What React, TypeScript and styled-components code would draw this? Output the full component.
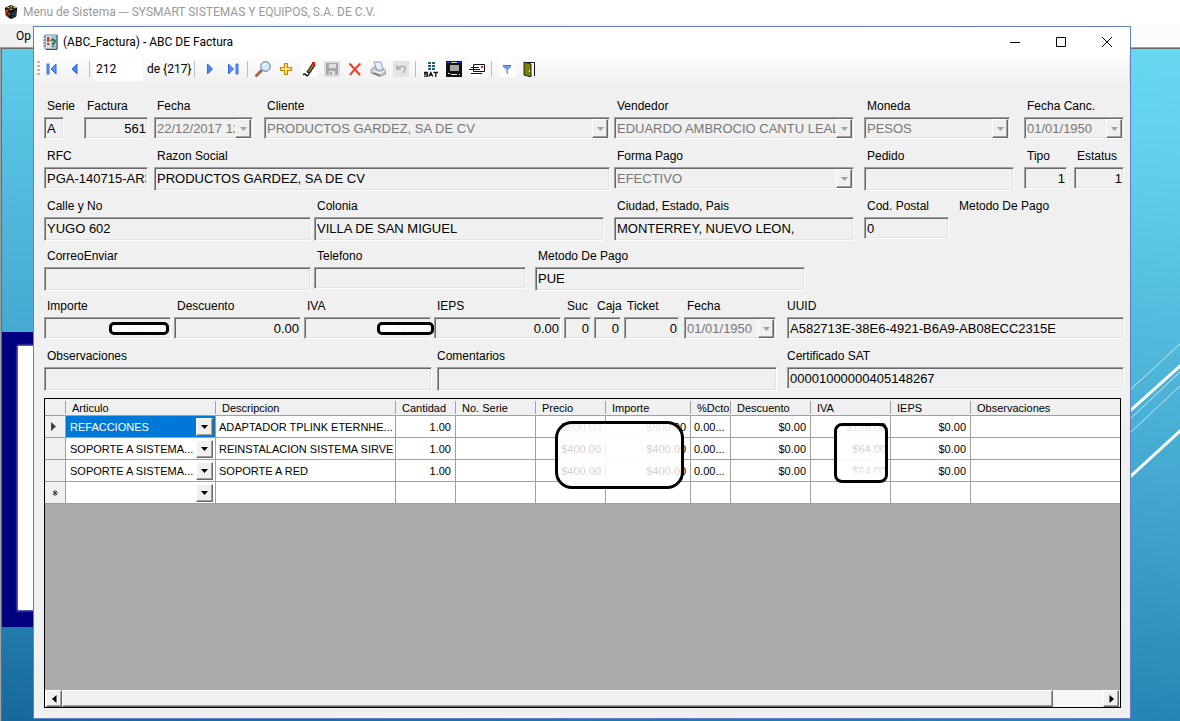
import React, { useId } from "react";
import styled, { createGlobalStyle, css } from "styled-components";

const uiFont = `Roboto, "Open Sans", sans-serif`;
const formFont = `"Liberation Sans", Arial, sans-serif`;

const Global = createGlobalStyle`
  *, *::before, *::after { box-sizing: border-box; }
  body { margin: 0; overflow: hidden; background: #1d73a5; font-family: ${formFont}; }
  button, input, select { font: inherit; color: inherit; margin: 0; padding: 0; border: 0; border-radius: 0; outline: 0; }
`;

/* ---------- main window behind ---------- */

const Desktop = styled.div`
  position: relative;
  display: flex;
  flex-direction: column;
  height: 100vh;
  min-height: 560px;
  overflow: hidden;
`;

const MainTitle = styled.header`
  display: flex;
  align-items: center;
  gap: 5px;
  height: 24px;
  padding-left: 4px;
  background: #fff;
  color: #999;
  font: 12px/16px ${uiFont};
`;

const MenuBar = styled.nav`
  display: flex;
  align-items: center;
  height: 23px;
  padding-left: 16px;
  background: linear-gradient(90deg, #f0f0f0, #fcfcfc);
  font: 12px/16px ${uiFont};
`;

const MenuButton = styled.button`
  background: none;
`;

const Client = styled.main`
  position: relative;
  flex: 1;
  border-left: 1px solid #a0a0a0;
  border-top: 1px solid #a0a0a0;
  box-shadow: inset 1px 1px 0 #696969;
  background: linear-gradient(187deg, #68d8f1 0%, #62d0ec 14%, #3fa1cb 60%, #2583b3 84%, #17679a 100%);
`;

const Logo = styled.div`
  position: absolute;
  left: 1px;
  top: 284px;
  width: 120px;
  height: 295px;
  background: #000080;
  padding: 14px 16px;
  &::before {
    content: "";
    display: block;
    height: 264px;
    background: #fff;
    box-shadow: 0 0 2px 1px #8080c8;
  }
`;

const Streaks = styled.svg`
  position: absolute;
  right: 0;
  top: 292px;
`;

/* ---------- invoice window ---------- */

const Window = styled.section`
  position: absolute;
  inset: 26px 49px 2px 33px;
  display: flex;
  flex-direction: column;
  border: 1px solid #5f7fc6;
  background: #f0f0f0;
`;

const TitleBar = styled.header`
  display: flex;
  align-items: center;
  height: 30px;
  padding-left: 8px;
  gap: 5px;
  background: #fff;
  font: 12px/16px ${uiFont};
  h1 { flex: 1; margin: 0; font: inherit; }
`;

const CaptionButtons = styled.div`
  display: flex;
  height: 100%;
`;

const CaptionButton = styled.button`
  display: grid;
  place-items: center;
  width: 46px;
  background: none;
`;

const ToolBar = styled.div`
  display: flex;
  align-items: center;
  height: 26px;
  padding: 0 0 2px 3px;
  background: linear-gradient(#fdfdfd, #f0f0f0);
  border-right: 1px solid #ddd;
  font: 12px/16px ${uiFont};
`;

const Grip = styled.span`
  width: 3px;
  height: 16px;
  background: repeating-linear-gradient(#b8b8b8 0 2px, transparent 2px 4px);
`;

const ToolButton = styled.button`
  display: grid;
  place-items: center;
  width: 23px;
  height: 22px;
  background: none;
`;

const Separator = styled.span`
  width: 1px;
  height: 16px;
  margin: 0 3px;
  background: #bdbdbd;
`;

const PositionInput = styled.input`
  width: 50px;
  height: 23px;
  padding-left: 3px;
  background: #fff;
`;

const Total = styled.span`
  width: 48px;
  padding-left: 4px;
  white-space: nowrap;
`;

/* ---------- form ---------- */

const Form = styled.form`
  padding: 15px 0 0 10px;
`;

const Row = styled.div<{ $end?: number }>`
  display: flex;
  height: 50px;
  padding-right: ${(p) => p.$end ?? 6}px;
`;

const FieldBox = styled.div<{ $w: number; $before: number }>`
  position: relative;
  flex: ${(p) => `${p.$w} ${p.$w} ${p.$w}px`};
  min-width: 0;
  margin-left: ${(p) => p.$before}px;
`;

const labelText = css`
  display: block;
  margin-bottom: 3px;
  font-size: 12px;
  line-height: 16px;
  white-space: nowrap;
`;

const Label = styled.label<{ $inset: number }>`
  ${labelText}
  padding-left: ${(p) => p.$inset}px;
`;

const Caption = styled.span`
  ${labelText}
  flex: none;
  width: 93px;
  margin-left: 10px;
`;

const Sunken = styled.div<{ $tall?: boolean; $muted?: boolean }>`
  display: flex;
  height: ${(p) => (p.$tall ? 24 : 22)}px;
  border: 1px solid;
  border-color: #a0a0a0 #fff #fff #a0a0a0;
  box-shadow: inset 1px 1px 0 #696969, inset -1px -1px 0 #e3e3e3;
  padding: 1px 1px 2px 1px;
  font-size: 13px;
  color: ${(p) => (p.$muted ? "#777" : "#000")};
`;

const TextInput = styled.input<{ $right?: boolean }>`
  flex: 1;
  min-width: 0;
  height: 18px;
  padding-left: 1px;
  background: transparent;
  text-align: ${(p) => (p.$right ? "right" : "left")};
  &:disabled { color: inherit; }
`;

const Select = styled.select`
  flex: 1;
  min-width: 0;
  height: 18px;
  padding-left: 1px;
  appearance: none;
  background: transparent;
  &:disabled { color: inherit; opacity: 1; }
`;

const DropButton = styled.button<{ $cell?: boolean }>`
  display: grid;
  place-items: center;
  flex: none;
  width: ${(p) => (p.$cell ? 17 : 16)}px;
  height: ${(p) => (p.$cell ? 18 : 19)}px;
  background: #f0f0f0;
  color: #000;
  border: 1px solid;
  border-color: #fff #696969 #696969 #fff;
  box-shadow: inset -1px -1px 0 #a0a0a0;
  &:disabled { color: #a0a0a0; }
`;

const Redaction = styled.span<{ $right: number; $w: number }>`
  position: absolute;
  right: ${(p) => p.$right}px;
  top: 24px;
  width: ${(p) => p.$w}px;
  height: 13px;
  border: 3px solid #000;
  border-radius: 5px;
  background: rgba(255, 255, 255, 0.95);
`;

/* ---------- detail grid ---------- */

const GridFrame = styled.div`
  position: relative;
  flex: 1;
  display: flex;
  flex-direction: column;
  min-height: 0;
  margin: 0 9px 10px 10px;
  border: 1px solid #000;
  background: #ababab;
`;

const GridBody = styled.div`
  flex: 1;
  min-height: 0;
  overflow: hidden;
`;

const Table = styled.table`
  width: 100%;
  table-layout: fixed;
  border-collapse: separate;
  border-spacing: 0;
  background: #fff;
  font-size: 11px;
  line-height: 14px;
`;

const Th = styled.th`
  height: 17px;
  padding: 1px 0 0 6px;
  border-bottom: 1px solid #a0a0a0;
  background: linear-gradient(#a0a0a0, #a0a0a0) right 0 top 2px / 1px 13px no-repeat #f0f0f0;
  font-weight: 400;
  text-align: left;
  white-space: nowrap;
  &:last-child { background: #f0f0f0; }
`;

const RowHead = styled.th`
  height: 22px;
  padding: 0;
  background: #f0f0f0;
  border-right: 1px solid #a0a0a0;
  border-bottom: 1px solid #a0a0a0;
  svg { display: block; margin-left: 5px; }
`;

const Td = styled.td<{ $right?: boolean }>`
  height: 22px;
  padding: 0 4px 0 3px;
  border-right: 1px solid #a0a0a0;
  border-bottom: 1px solid #a0a0a0;
  text-align: ${(p) => (p.$right ? "right" : "left")};
  white-space: nowrap;
  overflow: hidden;
  &:last-child { border-right: 0; }
`;

const ComboCell = styled.div<{ $selected?: boolean }>`
  display: flex;
  align-items: center;
  height: 21px;
  margin: 0 -4px 0 -3px;
  padding: 0 2px 0 3px;
  background: ${(p) => (p.$selected ? "#0078d7" : "#fff")};
  color: ${(p) => (p.$selected ? "#fff" : "#000")};
`;

const Scribble = styled.div<{ $x: number; $y: number; $w: number; $h: number; $r: number }>`
  position: absolute;
  left: ${(p) => p.$x}px;
  top: ${(p) => p.$y}px;
  width: ${(p) => p.$w}px;
  height: ${(p) => p.$h}px;
  border: 3px solid #000;
  border-radius: ${(p) => p.$r}px;
  background: linear-gradient(rgba(255, 255, 255, 0.86), rgba(255, 255, 255, 0.97) 20%, rgba(255, 255, 255, 0.78) 40%, rgba(255, 255, 255, 0.96) 58%, rgba(255, 255, 255, 0.78) 76%, #fff 92%);
`;

const ScrollBar = styled.div`
  display: flex;
  height: 17px;
  padding: 0 1px;
  background: repeating-conic-gradient(#fff 0 25%, #f0f0f0 0 50%) 0 0 / 2px 2px;
`;

const raised = css`
  background: #f0f0f0;
  border: 1px solid;
  border-color: #fff #696969 #696969 #fff;
  box-shadow: inset -1px -1px 0 #a0a0a0;
`;

const ScrollButton = styled.button`
  ${raised}
  display: grid;
  place-items: center;
  flex: none;
  width: 16px;
`;

const Track = styled.div`
  flex: 1;
  padding-right: 50px;
`;

const Thumb = styled.div`
  ${raised}
  height: 100%;
`;

/* ---------- icons ---------- */

const Svg = ({ children, size = 16 }: { children: React.ReactNode; size?: number }) => (
  <svg width={size} height={size} viewBox="0 0 16 16" aria-hidden="true">{children}</svg>
);

const CubeIcon = () => (
  <svg width="14" height="14" viewBox="0 0 16 16" aria-hidden="true">
    <path d="M1 3 8 0l7 3v2l-1 8-5 3-3-1-4-3z" fill="#14120c" />
    <path d="M2 6l2 1v3L2 9zM5 8l2 1v3l-2-1zM3 11l2 1v2l-2-1z" fill="#d84020" />
    <path d="M3 3l2-1 2 1-2 1zM7 1.500 9 1l1 1-2 1zM10 3l2-1 2 1-2 1zM6 4.500 8 4l2 1-2 1z" fill="#f5d020" />
    <path d="M9 9l2-1v3l-2 1zM12 7l2-1v2l-2 1zM9 13l2-1v2l-2 1zM12 10l1.500-1v3L12 13z" fill="#24527c" />
    <path d="M3 5l2 1v1L2 6z" fill="#f08020" />
  </svg>
);

const BookIcon = () => (
  <Svg>
    <path d="M3 1h12v14H3z" fill="#dfe8f2" stroke="#6d87a6" />
    <path d="M9 1.500h5.500v13H9z" fill="#a9c0d8" />
    <path d="M15 1v14.500H4" stroke="#35506e" fill="none" />
    <path d="M1 3h3M1 6h3M1 9h3M1 12h3" stroke="#777" />
    <path d="M5 3h2.500v5H5zM5 9h2.500v2H5z" fill="#e83818" />
    <path d="M9 7q1-2 3-1t0 3l-1 1v1M11 12v1" fill="none" stroke="#0a7020" strokeWidth="1.600" />
  </Svg>
);

const blue = "#2f6be0";
const FirstIcon = () => (
  <Svg><path d="M3 3h2v10H3z" fill="#7ba4f4" stroke={blue} /><path d="M12 3v10L7 8z" fill="#5b8df0" stroke={blue} /></Svg>
);
const PrevIcon = () => <Svg><path d="M10 3v10L5 8z" fill="#4b80ee" stroke={blue} /></Svg>;
const NextIcon = () => <Svg><path d="M5.500 3v10l5-5z" fill="#4b80ee" stroke={blue} /></Svg>;
const LastIcon = () => (
  <Svg><path d="M3.500 3v10l5-5z" fill="#5b8df0" stroke={blue} /><path d="M11 3h2v10h-2z" fill="#7ba4f4" stroke={blue} /></Svg>
);
const SearchIcon = () => (
  <Svg>
    <path d="M6.500 9.500 1.500 14.500" stroke="#a06a48" strokeWidth="3" strokeLinecap="round" />
    <circle cx="10.500" cy="5.500" r="4.700" fill="#cfeafc" stroke="#8796ac" strokeWidth="1.400" />
    <path d="M8 5q1-2.500 3.500-2.500" stroke="#fff" strokeWidth="1.500" fill="none" />
  </Svg>
);
const PlusIcon = () => (
  <Svg><path d="M6.500 2.500h3v4h4v3h-4v4h-3v-4h-4v-3h4z" fill="#ffe07a" stroke="#c08a10" strokeWidth="1.200" /></Svg>
);
const PencilIcon = () => (
  <Svg>
    <path d="M0 0h16v16H0z" fill="#fff" />
    <path d="M13 3 7 12" stroke="#111" strokeWidth="4" />
    <path d="M13 3 7.500 11" stroke="#8a8a10" strokeWidth="2" />
    <path d="M11 1h3v3h-3z" fill="#e01818" />
    <path d="M2 14q2-2 3 0t3-1" stroke="#111" strokeWidth="1.400" fill="none" />
  </Svg>
);
const SaveIcon = () => (
  <Svg>
    <path d="M0 0h16v16H0z" fill="#dedede" />
    <path d="M2 2h12v12H2z" fill="#a8a8a8" />
    <path d="M5 3h7v4H5zM5 10h6v4H5z" fill="#dedede" />
    <path d="M6 11h2v3H6z" fill="#a8a8a8" />
  </Svg>
);
const DeleteIcon = () => (
  <Svg><path d="M2.500 2.500 13 14M13.500 2.500Q7 8 3 14" stroke="#f23a20" strokeWidth="2" fill="none" /></Svg>
);
const PrintIcon = () => (
  <Svg>
    <path d="M1 8.500 4 6h8l3.500 4v3L10 15.500 1 12z" fill="#c4c4c4" stroke="#8a8a8a" strokeWidth="0.800" />
    <path d="M4 1h7l2 8-6 0z" fill="#e5f0fc" stroke="#8ba0bd" />
    <path d="M2 9.500 10 12l5-2" stroke="#fff" fill="none" />
    <path d="M3 12l7 2.500" stroke="#666" />
  </Svg>
);
const UndoIcon = () => (
  <Svg>
    <path d="M0 0h16v16H0z" fill="#e4e4e4" />
    <path d="M4 4v4h4M4.500 7.500Q7 4.500 10.500 5.500T10 12" stroke="#aaa" strokeWidth="1.500" fill="none" />
  </Svg>
);
const SatIcon = () => (
  <Svg>
    <path d="M0 0h16v16H0z" fill="#fff" />
    <path d="M5 1h3v2H5zM9 1h3v2H9zM5 4h3v2H5zM9 4h3v2H9zM5 7h3v2H5zM9 7h3v2H9z" fill="#245a8c" />
    <path d="M5 11.500H1.700v1.700H4.500v2H1M6 15.500l1.800-4 2 4M7 14h2M10.500 11.500H15M12.800 12v4" stroke="#111" strokeWidth="1.300" fill="none" />
  </Svg>
);
const ScreenIcon = () => (
  <Svg>
    <path d="M0 0h16v16H0z" fill="#111" />
    <path d="M4 4h9v6H4z" fill="#a8a8a8" />
    <path d="M1 1h3v1H1zM12 1h3v1h-3z" fill="#3048f0" />
    <path d="M5 1h6v1H5z" fill="#ddd" />
    <path d="M2 12h2v1H2zM5 13h6v1H5zM13 13h1v1h-1z" fill="#eee" />
  </Svg>
);
const MailIcon = () => (
  <Svg>
    <path d="M0 0h16v16H0z" fill="#fff" />
    <path d="M4.500 3.500h11v7h-11z" fill="#fff" stroke="#111" />
    <path d="M12 5h2v2h-2z" fill="#d02020" />
    <path d="M2 6.500h5M0 8.500h7M2 12.500h11M6 6.500h4M6 8.500h5" stroke="#111" />
  </Svg>
);
const FilterIcon = () => (
  <Svg><path d="M0 0h16v16H0z" fill="#fff" /><path d="M4 4h8v2l-3 3v4H7.500V9L4 6z" fill="#6f9cec" /><path d="M4 4h8v1H4z" fill="#3d72d8" /></Svg>
);
const DoorIcon = () => (
  <Svg>
    <path d="M4 1.500h8.500V15" fill="none" stroke="#111" />
    <path d="M2 1l7 2v13l-7-2z" fill="#808000" stroke="#222" />
    <path d="M7 9h1v2H7z" fill="#fff" />
  </Svg>
);

const DownArrow = () => (
  <svg width="7" height="4" viewBox="0 0 7 4" aria-hidden="true"><path d="M0 0h7L3.500 4z" fill="currentColor" /></svg>
);

/* ---------- form fields ---------- */

type FieldProps = {
  label: string;
  w: number;
  before?: number;
  inset?: number;
  value?: string;
  kind?: "text" | "select" | "date";
  right?: boolean;
  tall?: boolean;
  children?: React.ReactNode;
};

const Field = ({ label, w, before = 0, inset = 3, value = "", kind = "text", right, tall, children }: FieldProps) => {
  const id = useId();
  return (
    <FieldBox $w={w} $before={before}>
      <Label htmlFor={id} $inset={inset}>{label}</Label>
      <Sunken $tall={tall} $muted={kind !== "text"}>
        {kind === "select" ? (
          <Select id={id} disabled defaultValue={value}><option>{value}</option></Select>
        ) : (
          <TextInput id={id} $right={right} readOnly disabled={kind === "date"} value={value} />
        )}
        {kind !== "text" && (
          <DropButton type="button" disabled aria-label={`Abrir ${label}`}><DownArrow /></DropButton>
        )}
      </Sunken>
      {children}
    </FieldBox>
  );
};

/* ---------- data ---------- */

const columns: { title: string; width?: number }[] = [
  { title: "Articulo", width: 150 },
  { title: "Descripcion", width: 180 },
  { title: "Cantidad", width: 60 },
  { title: "No. Serie", width: 80 },
  { title: "Precio", width: 70 },
  { title: "Importe", width: 85 },
  { title: "%Dcto", width: 40 },
  { title: "Descuento", width: 80 },
  { title: "IVA", width: 80 },
  { title: "IEPS", width: 80 },
  { title: "Observaciones" },
];

const lines = [
  ["REFACCIONES", "ADAPTADOR TPLINK ETERNHE...", "1.00", "", "$800.00", "$800.00", "0.00...", "$0.00", "$128.00", "$0.00", ""],
  ["SOPORTE A SISTEMA...", "REINSTALACION SISTEMA SIRVE", "1.00", "", "$400.00", "$400.00", "0.00...", "$0.00", "$64.00", "$0.00", ""],
  ["SOPORTE A SISTEMA...", "SOPORTE A RED", "1.00", "", "$400.00", "$400.00", "0.00...", "$0.00", "$64.00", "$0.00", ""],
  ["", "", "", "", "", "", "", "", "", "", ""],
];

const rightAligned = new Set([2, 4, 5, 7, 8, 9]);

const tools: { name: string; icon: React.ReactNode; gap?: boolean }[] = [
  { name: "Siguiente", icon: <NextIcon /> },
  { name: "Ultimo", icon: <LastIcon /> },
  { name: "Buscar", icon: <SearchIcon />, gap: true },
  { name: "Agregar", icon: <PlusIcon /> },
  { name: "Editar", icon: <PencilIcon /> },
  { name: "Guardar", icon: <SaveIcon /> },
  { name: "Eliminar", icon: <DeleteIcon /> },
  { name: "Imprimir", icon: <PrintIcon /> },
  { name: "Deshacer", icon: <UndoIcon /> },
  { name: "SAT", icon: <SatIcon />, gap: true },
  { name: "Pantalla", icon: <ScreenIcon /> },
  { name: "Correo", icon: <MailIcon /> },
  { name: "Filtro", icon: <FilterIcon />, gap: true },
  { name: "Salir", icon: <DoorIcon /> },
];

export default function App() {
  return (
    <Desktop>
      <Global />
      <MainTitle><CubeIcon />Menu de Sistema --- SYSMART SISTEMAS Y EQUIPOS, S.A. DE C.V.</MainTitle>
      <MenuBar><MenuButton type="button">Op</MenuButton></MenuBar>
      <Client>
        <Logo />
        <Streaks width="49" height="140" viewBox="1131 340 49 140" stroke="#fff" aria-hidden="true">
          <path d="M1130 390 1181 343M1130 419 1181 371M1130 433 1181 385" strokeOpacity="0.7" />
          <path d="M1130 411 1181 365M1130 477 1181 430" strokeWidth="3" />
        </Streaks>
      </Client>

      <Window>
        <TitleBar>
          <BookIcon />
          <h1>(ABC_Factura) - ABC DE Factura</h1>
          <CaptionButtons>
            <CaptionButton type="button" aria-label="Minimizar">
              <svg width="10" height="10"><path d="M0 5.500h10" stroke="#000" /></svg>
            </CaptionButton>
            <CaptionButton type="button" aria-label="Maximizar">
              <svg width="10" height="10"><path d="M.5.5h9v9h-9z" stroke="#000" fill="none" /></svg>
            </CaptionButton>
            <CaptionButton type="button" aria-label="Cerrar">
              <svg width="10" height="10"><path d="M0 0l10 10M10 0 0 10" stroke="#000" /></svg>
            </CaptionButton>
          </CaptionButtons>
        </TitleBar>

        <ToolBar>
          <Grip />
          <ToolButton type="button" aria-label="Primero"><FirstIcon /></ToolButton>
          <ToolButton type="button" aria-label="Anterior"><PrevIcon /></ToolButton>
          <Separator />
          <PositionInput aria-label="Posicion" defaultValue="212" />
          <Total>de {"{217}"}</Total>
          <Separator />
          {tools.map((t) => (
            <React.Fragment key={t.name}>
              {t.gap && <Separator />}
              <ToolButton type="button" aria-label={t.name}>{t.icon}</ToolButton>
            </React.Fragment>
          ))}
        </ToolBar>

        <Form>
          <Row>
            <Field label="Serie" w={20} value="A" />
            <Field label="Factura" w={64} before={20} value="561" right />
            <Field label="Fecha" w={99} before={6} value="22/12/2017 12:00" kind="date" />
            <Field label="Cliente" w={346} before={11} value="PRODUCTOS GARDEZ, SA DE CV" kind="select" />
            <Field label="Vendedor" w={240} before={4} value="EDUARDO AMBROCIO CANTU LEAL" kind="select" />
            <Field label="Moneda" w={146} before={10} value="PESOS" kind="select" />
            <Field label="Fecha Canc." w={100} before={14} value="01/01/1950" kind="date" />
          </Row>
          <Row>
            <Field label="RFC" w={104} value="PGA-140715-AR3" />
            <Field label="Razon Social" w={456} before={6} value="PRODUCTOS GARDEZ, SA DE CV" tall />
            <Field label="Forma Pago" w={240} before={4} value="EFECTIVO" kind="select" />
            <Field label="Pedido" w={150} before={10} tall />
            <Field label="Tipo" w={43} before={10} value="1" right />
            <Field label="Estatus" w={50} before={7} value="1" right />
          </Row>
          <Row $end={78}>
            <Field label="Calle y No" w={267} value="YUGO 602" tall />
            <Field label="Colonia" w={290} before={3} value="VILLA DE SAN MIGUEL" tall />
            <Field label="Ciudad, Estado, Pais" w={240} before={10} value="MONTERREY, NUEVO LEON," tall />
            <Field label="Cod. Postal" w={85} before={10} value="0" />
            <Caption>Metodo De Pago</Caption>
          </Row>
          <Row $end={325}>
            <Field label="CorreoEnviar" w={267} tall />
            <Field label="Telefono" w={212} before={3} />
            <Field label="Metodo De Pago" w={270} before={9} value="PUE" tall />
          </Row>
          <Row>
            <Field label="Importe" w={127} value="1,600.00" right><Redaction $right={2} $w={60} /></Field>
            <Field label="Descuento" w={127} before={3} value="0.00" right />
            <Field label="IVA" w={127} before={3} value="256.00" right><Redaction $right={-3} $w={57} /></Field>
            <Field label="IEPS" w={127} before={3} value="0.00" right />
            <Field label="Suc" w={27} before={3} value="0" right />
            <Field label="Caja" w={27} before={3} value="0" right />
            <Field label="Ticket" w={55} before={3} value="0" right />
            <Field label="Fecha" w={92} before={5} value="01/01/1950" kind="date" />
            <Field label="UUID" w={337} before={11} inset={0} value="A582713E-38E6-4921-B6A9-AB08ECC2315E" />
          </Row>
          <Row>
            <Field label="Observaciones" w={388} tall />
            <Field label="Comentarios" w={340} before={5} inset={0} tall />
            <Field label="Certificado SAT" w={337} before={10} inset={0} value="00001000000405148267" />
          </Row>
        </Form>

        <GridFrame>
          <GridBody>
            <Table>
              <colgroup>
                <col width={21} />
                {columns.map((c) => <col key={c.title} width={c.width} />)}
              </colgroup>
              <thead>
                <tr>
                  <Th aria-label="Fila" />
                  {columns.map((c) => <Th key={c.title} scope="col">{c.title}</Th>)}
                </tr>
              </thead>
              <tbody>
                {lines.map((line, r) => (
                  <tr key={r}>
                    <RowHead scope="row" aria-label={`Fila ${r + 1}`}>
                      {r === 0 && <svg width="8" height="9"><path d="M1 0v9l5-4.500z" fill="#404040" /></svg>}
                      {r === 3 && <svg width="10" height="8"><path d="M5 1v6M3 2l4 4M7 2l-4 4M3 4h5" stroke="#404040" /></svg>}
                    </RowHead>
                    {line.map((text, c) => (
                      <Td key={c} $right={rightAligned.has(c)}>
                        {c === 0 ? (
                          <ComboCell $selected={r === 0}>
                            <Select aria-label={`Articulo ${r + 1}`} defaultValue={text}><option>{text}</option></Select>
                            <DropButton $cell type="button" aria-label={`Abrir articulo ${r + 1}`}><DownArrow /></DropButton>
                          </ComboCell>
                        ) : text}
                      </Td>
                    ))}
                  </tr>
                ))}
              </tbody>
            </Table>
          </GridBody>
          <Scribble $x={510} $y={22} $w={129} $h={68} $r={17} />
          <Scribble $x={789} $y={24} $w={54} $h={60} $r={8} />
          <ScrollBar>
            <ScrollButton type="button" aria-label="Desplazar a la izquierda">
              <svg width="5" height="8"><path d="M4.500 0v8L0 4z" /></svg>
            </ScrollButton>
            <Track><Thumb /></Track>
            <ScrollButton type="button" aria-label="Desplazar a la derecha">
              <svg width="5" height="8"><path d="M.5 0v8L5 4z" /></svg>
            </ScrollButton>
          </ScrollBar>
        </GridFrame>
      </Window>
    </Desktop>
  );
}
